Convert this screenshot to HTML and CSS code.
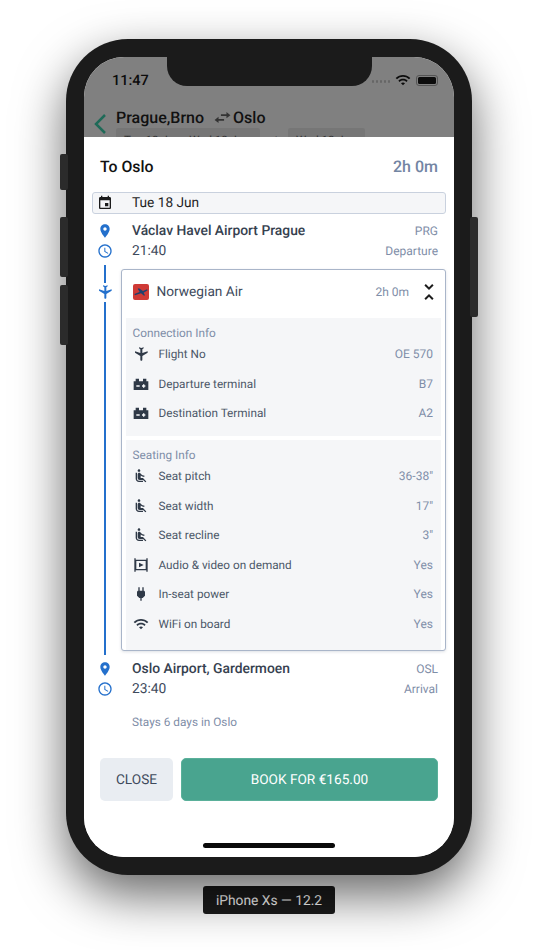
FILE: index.html
```html
<!DOCTYPE html>
<html lang="en">
<head>
  <meta charset="UTF-8">
  <meta name="viewport" content="width=device-width, initial-scale=1.0">
  <title>To Oslo</title>
  <link rel="stylesheet" href="styles.css">
</head>
<body>
  <svg class="defs" width="0" height="0">
    <symbol id="i-place" viewBox="0 0 24 24"><path d="M12 2C8.13 2 5 5.13 5 9c0 5.25 7 13 7 13s7-7.75 7-13c0-3.87-3.13-7-7-7zm0 9.5c-1.38 0-2.5-1.12-2.5-2.5s1.12-2.5 2.5-2.5 2.5 1.12 2.5 2.5-1.12 2.5-2.5 2.5z"/></symbol>
    <symbol id="i-clock" viewBox="0 0 24 24"><path d="M11.99 2C6.47 2 2 6.48 2 12s4.47 10 9.99 10C17.52 22 22 17.52 22 12S17.52 2 11.99 2zM12 20c-4.42 0-8-3.58-8-8s3.58-8 8-8 8 3.58 8 8-3.58 8-8 8zm.5-13H11v6l5.25 3.15.75-1.23-4.5-2.67z"/></symbol>
    <symbol id="i-plane" viewBox="0 0 24 24"><path transform="rotate(180 12 12)" d="M21 16v-2l-8-5V3.5c0-.83-.67-1.5-1.5-1.5S10 2.67 10 3.5V9l-8 5v2l8-2.5V19l-2 1.5V22l3.5-1 3.5 1v-1.5L13 19v-5.5l8 2.5z"/></symbol>
    <symbol id="i-terminal" viewBox="0 0 24 24"><path fill-rule="evenodd" d="M4 8V4h5v4h6V4h5v4h3v13H1V8h3zm1 6v2h5v-2H5zm10 0h-1.500v2H15v1.500h2V16h1.500v-2H17v-1.500h-2V14z"/></symbol>
    <symbol id="i-seat" viewBox="0 0 24 24"><path d="M7.590 5.410c-.78-.78-.78-2.050 0-2.830.78-.78 2.050-.78 2.830 0 .78.78.78 2.050 0 2.830-.79.79-2.050.79-2.830 0zM6 16V7H4v9c0 2.760 2.240 5 5 5h6v-2H9c-1.660 0-3-1.340-3-3zm14 4.070L14.930 15H11.500v-3.680c1.400 1.150 3.600 2.160 5.500 2.160v-2.160c-1.660.02-3.610-.87-4.670-2.040l-1.400-1.550c-.19-.21-.43-.38-.69-.5-.29-.14-.62-.23-.96-.23h-.03C8.010 7 7 8.010 7 9.250V15c0 1.660 1.340 3 3 3h5.070l3.500 3.500L20 20.070z"/></symbol>
    <symbol id="i-video" viewBox="0 0 24 24"><path fill-rule="evenodd" d="M2 2h2v2h16V2h2v20h-2v-2H4v2H2V2zm3 4v12h14V6H5zm4 2.500l7 3.500-7 3.500v-7z"/></symbol>
    <symbol id="i-power" viewBox="0 0 24 24"><path d="M16 7V2h-2v5h-4V2H8v5c-1 0-2 1-2 2v5.500L9.500 18H11v4h2v-4h1.500l3.500-3.500V9c0-1-1-2-2-2z"/></symbol>
    <symbol id="i-wifi" viewBox="0 0 24 24"><path d="M1 9l2 2c4.970-4.970 13.030-4.970 18 0l2-2C16.930 2.930 7.080 2.930 1 9zm8 8l3 3 3-3c-1.650-1.660-4.340-1.660-6 0zm-4-4l2 2c2.760-2.760 7.240-2.760 10 0l2-2C15.140 9.140 8.870 9.140 5 13z"/></symbol>
  </svg>

  <div class="phone">
    <span class="side-btn mute"></span>
    <span class="side-btn vol-up"></span>
    <span class="side-btn vol-down"></span>
    <span class="side-btn power"></span>

    <div class="screen">
      <div class="notch"></div>

      <div class="backdrop">
        <div class="status">
          <span class="clock">11:47</span>
          <span class="status-icons">
            <span class="dots"><i></i><i></i><i></i><i></i><i></i></span>
            <svg class="status-wifi"><use href="#i-wifi"/></svg>
            <span class="battery"><i></i></span>
          </span>
        </div>
        <div class="nav">
          <svg class="back" viewBox="0 0 14 22"><path d="M12 2L3 11l9 9"/></svg>
          <div>
            <div class="route">
              <span>Prague,Brno</span>
              <svg class="swap" viewBox="0 0 24 24"><path d="M10 8h7V5l5 4-5 4v-3h-7zM14 14H7v-3l-5 4 5 4v-3h7z"/></svg>
              <span>Oslo</span>
            </div>
            <div class="chips">
              <span class="chip chip-out">Tue 18 Jun - Wed 18 Jun</span>
              <span class="chip-sep">⇄</span>
              <span class="chip chip-back">Wed 18 Jun</span>
            </div>
          </div>
        </div>
      </div>

      <div class="sheet">
        <div class="sheet-head">
          <span class="sheet-title">To Oslo</span>
          <span class="sheet-time">2h 0m</span>
        </div>

        <div class="date-bar">
          <svg class="date-icon" viewBox="0 0 24 24"><path d="M17 12h-5v5h5v-5zM16 1v2H8V1H6v2H5c-1.110 0-1.990.9-1.990 2L3 19c0 1.100.89 2 2 2h14c1.100 0 2-.9 2-2V5c0-1.100-.9-2-2-2h-1V1h-2zm3 18H5V8h14v11z"/></svg>
          <span>Tue 18 Jun</span>
        </div>

        <div class="stop stop-from">
          <div class="stop-row">
            <svg class="stop-icon"><use href="#i-place"/></svg>
            <span class="stop-name">Václav Havel Airport Prague</span>
            <span class="stop-side">PRG</span>
          </div>
          <div class="stop-row">
            <svg class="stop-icon"><use href="#i-clock"/></svg>
            <span class="stop-time">21:40</span>
            <span class="stop-side">Departure</span>
          </div>
        </div>

        <div class="leg">
          <div class="rail">
            <span class="rail-line rail-top"></span>
            <svg class="rail-plane"><use href="#i-plane"/></svg>
            <span class="rail-line rail-rest"></span>
          </div>

          <div class="card">
            <div class="card-head">
              <span class="logo"><svg viewBox="0 0 24 24"><path d="M2 15l8-3-3-5 2-.5 6 4 6-2.500 1 1.500-6 3.500 2 4-1.500.5-4.500-3.500-9 3z"/></svg></span>
              <span class="airline">Norwegian Air</span>
              <span class="card-time">2h 0m</span>
              <svg class="unfold" viewBox="0 0 24 24"><path d="M7.410 18.590L8.830 20 12 16.830 15.170 20l1.410-1.410L12 14l-4.590 4.590zm9.180-13.180L15.170 4 12 7.170 8.830 4 7.410 5.410 12 10l4.590-4.590z"/></svg>
            </div>

            <div class="info info-conn">
              <div class="info-title">Connection Info</div>
              <div class="info-row"><svg class="info-icon"><use href="#i-plane"/></svg><span>Flight No</span><b>OE 570</b></div>
              <div class="info-row"><svg class="info-icon"><use href="#i-terminal"/></svg><span>Departure terminal</span><b>B7</b></div>
              <div class="info-row"><svg class="info-icon"><use href="#i-terminal"/></svg><span>Destination Terminal</span><b>A2</b></div>
            </div>

            <div class="info info-seat">
              <div class="info-title">Seating Info</div>
              <div class="info-row"><svg class="info-icon"><use href="#i-seat"/></svg><span>Seat pitch</span><b>36-38"</b></div>
              <div class="info-row"><svg class="info-icon"><use href="#i-seat"/></svg><span>Seat width</span><b>17"</b></div>
              <div class="info-row"><svg class="info-icon"><use href="#i-seat"/></svg><span>Seat recline</span><b>3"</b></div>
              <div class="info-row"><svg class="info-icon"><use href="#i-video"/></svg><span>Audio &amp; video on demand</span><b>Yes</b></div>
              <div class="info-row"><svg class="info-icon"><use href="#i-power"/></svg><span>In-seat power</span><b>Yes</b></div>
              <div class="info-row"><svg class="info-icon"><use href="#i-wifi"/></svg><span>WiFi on board</span><b>Yes</b></div>
            </div>
          </div>
        </div>

        <div class="stop stop-to">
          <div class="stop-row">
            <svg class="stop-icon"><use href="#i-place"/></svg>
            <span class="stop-name">Oslo Airport, Gardermoen</span>
            <span class="stop-side">OSL</span>
          </div>
          <div class="stop-row">
            <svg class="stop-icon"><use href="#i-clock"/></svg>
            <span class="stop-time">23:40</span>
            <span class="stop-side">Arrival</span>
          </div>
        </div>

        <div class="stays">Stays 6 days in Oslo</div>

        <div class="actions">
          <button class="btn btn-close" type="button">CLOSE</button>
          <button class="btn btn-book" type="button">BOOK FOR €165.00</button>
        </div>

        <div class="home-bar"></div>
      </div>
    </div>
  </div>

  <div class="device-label">iPhone Xs — 12.2</div>
</body>
</html>
```

FILE: styles.css
```css
* {
  box-sizing: border-box;
}
html, body {
  margin: 0;
  height: 950px;
  overflow: hidden;
}
body {
  background: #fff;
  font-family: Roboto, "Liberation Sans", sans-serif;
  text-rendering: geometricPrecision;
  display: flex;
  flex-direction: column;
  align-items: center;
  padding-top: 39px;
}
.defs {
  position: absolute;
}

/* device */
.phone {
  position: relative;
  width: 406px;
  height: 836px;
  padding: 18px;
  background: #1b1b1b;
  border-radius: 62px;
  box-shadow: 0 20px 50px rgba(0, 0, 0, .6);
}
.side-btn {
  position: absolute;
  width: 8px;
  background: #2b2b2b;
  border-radius: 2px;
}
.mute { left: -6px; top: 115px; height: 36px; }
.vol-up { left: -6px; top: 178px; height: 60px; }
.vol-down { left: -6px; top: 246px; height: 60px; }
.power { right: -6px; top: 178px; height: 100px; }
.screen {
  position: relative;
  height: 800px;
  border-radius: 40px;
  overflow: hidden;
  background: #fff;
}
.notch {
  position: absolute;
  left: 83px;
  top: 0;
  width: 205px;
  height: 29px;
  background: #1b1b1b;
  border-radius: 0 0 20px 20px;
}

/* greyed page behind the sheet */
.backdrop {
  height: 80px;
  background: #808080;
  overflow: hidden;
}
.status {
  display: flex;
  justify-content: space-between;
  align-items: center;
  height: 20px;
  margin-top: 13px;
  padding: 0 16px 0 28px;
}
.clock {
  font-size: 14.500px;
  font-weight: 500;
  color: #0c0c0c;
}
.status-icons {
  display: flex;
  align-items: center;
}
.dots {
  display: flex;
  gap: 1.500px;
  margin-right: 5px;
  padding-top: 3px;
}
.dots i {
  width: 2.500px;
  height: 2.500px;
  border-radius: 50%;
  background: #666;
}
.status-wifi {
  width: 16px;
  height: 16px;
  fill: #0c0c0c;
  margin-right: 5px;
}
.battery {
  display: block;
  width: 22px;
  height: 11px;
  padding: 1px;
  border: 1px solid #555;
  border-radius: 3px;
}
.battery i {
  display: block;
  height: 100%;
  background: #0c0c0c;
  border-radius: 1.500px;
}
.nav {
  display: flex;
  margin-top: 16px;
  padding-left: 9px;
}
.back {
  width: 14px;
  height: 22px;
  margin-top: 7px;
  margin-right: 9px;
  fill: none;
  stroke: #1f6a58;
  stroke-width: 2.500;
}
.route {
  display: flex;
  align-items: center;
  height: 22px;
  font-size: 16px;
  font-weight: 500;
  color: #111;
}
.swap {
  width: 19px;
  height: 19px;
  margin: 0 1px 0 9px;
  fill: #333;
}
.chips {
  display: flex;
  align-items: center;
  font-size: 11.500px;
  color: #333;
}
.chip {
  background: #767676;
  padding: 5px 8px;
  border-radius: 2px;
  white-space: nowrap;
}
.chip-out { width: 144px; }
.chip-back { width: 77px; }
.chip-sep {
  width: 28px;
  text-align: center;
}

/* sheet */
.sheet {
  height: 720px;
  background: #fff;
  border-radius: 4px 4px 0 0;
  padding-top: 18px;
}
.sheet-head {
  display: flex;
  justify-content: space-between;
  align-items: center;
  height: 22px;
  padding: 0 16px;
}
.sheet-title {
  font-size: 15.800px;
  font-weight: 500;
  color: #111;
}
.sheet-time {
  font-size: 16px;
  font-weight: 500;
  color: #7385a3;
}
.date-bar {
  display: flex;
  align-items: center;
  height: 22px;
  margin: 15px 8px 0;
  background: #f5f6f8;
  border: 1px solid #c9d1de;
  border-radius: 3px;
  font-size: 13.700px;
  color: #1e1e1e;
}
.date-icon {
  width: 16px;
  height: 16px;
  margin: 0 19px 0 4px;
  fill: #1c1c1c;
}
.stop {
  padding: 0 16px 0 13px;
}
.stop-from {
  margin-top: 7px;
}
.stop-to {
  margin-top: 8px;
}
.stop-row {
  display: flex;
  align-items: center;
  height: 20px;
}
.stop-icon {
  width: 16px;
  height: 16px;
  flex: none;
  fill: #2470cc;
  margin-right: 19px;
}
.stop-name {
  flex: 1;
  font-size: 13.850px;
  font-weight: 500;
  color: #36414f;
}
.stop-time {
  flex: 1;
  font-size: 13.800px;
  color: #3e4a5c;
}
.stop-side {
  font-size: 12px;
  color: #7f8ea8;
}

/* flight leg */
.leg {
  display: flex;
  margin-top: 4px;
  padding-right: 8px;
}
.rail {
  display: flex;
  flex-direction: column;
  align-items: center;
  width: 36px;
  margin-left: 3px;
  margin-right: -2.500px;
  margin-bottom: -4px;
  flex: none;
}
.rail-line {
  width: 2px;
  background: #2470cc;
}
.rail-top {
  height: 18px;
}
.rail-rest {
  flex: 1;
}
.rail-plane {
  width: 16px;
  height: 16px;
  flex: none;
  margin: 1px 0 2px;
  fill: #2470cc;
}
.card {
  flex: 1;
  margin-top: 4px;
  border: 1px solid #a9b5c9;
  border-radius: 3px;
  background: #fff;
  padding: 0 4px;
  box-shadow: 0 1px 3px rgba(90, 105, 130, .2);
}
.card-head {
  display: flex;
  align-items: center;
  height: 47.500px;
  padding: 0 7px 3.500px;
}
.logo {
  display: flex;
  width: 16px;
  height: 16px;
  background: #cf3a36;
  border-radius: 2px;
  margin-right: 8px;
}
.logo svg {
  fill: #20406e;
}
.airline {
  flex: 1;
  font-size: 13.700px;
  color: #3e4a5c;
}
.card-time {
  font-size: 12px;
  color: #7f8ea8;
  margin-right: 8px;
}
.unfold {
  width: 24px;
  height: 24px;
  fill: #1c1c1c;
  margin-right: -7px;
}
.info {
  background: #f5f6f8;
  padding: 8px 8px 0;
}
.info-conn {
  height: 118px;
}
.info-seat {
  height: 210px;
  margin-top: 4px;
}
.info-title {
  height: 14px;
  line-height: 14px;
  margin-left: -1px;
  font-size: 11.800px;
  color: #7f8ea8;
}
.info-row {
  display: flex;
  align-items: center;
  height: 29.500px;
  font-size: 11.750px;
  color: #4c5868;
}
.info-row span {
  flex: 1;
}
.info-row b {
  font-size: 12px;
  font-weight: 400;
  color: #7f8ea8;
}
.info-icon {
  width: 16px;
  height: 16px;
  flex: none;
  margin: 0 10px 0 -1px;
  fill: #2f3947;
}

/* footer */
.stays {
  margin-top: 14px;
  padding-left: 48px;
  font-size: 11.800px;
  line-height: 18px;
  color: #7f8ea8;
}
.actions {
  display: flex;
  gap: 8px;
  margin-top: 27px;
  padding: 0 16px;
}
.btn {
  height: 43px;
  padding-top: 2px;
  border-radius: 5px;
  font-family: inherit;
  font-size: 13.650px;
  text-rendering: geometricPrecision;
}
.btn-close {
  width: 73px;
  flex: none;
  border: 0;
  padding-left: 0;
  padding-right: 0;
  background: #e9edf2;
  color: #3e4a5c;
}
.btn-book {
  flex: 1;
  border: 1px solid #5ab09a;
  background: #49a48f;
  color: #fff;
}
.home-bar {
  width: 132px;
  height: 5px;
  margin: 42px auto 0;
  background: #0a0a0a;
  border-radius: 3px;
}
.device-label {
  margin-top: 11px;
  width: 132px;
  height: 28px;
  line-height: 30px;
  background: #1b1b1b;
  border-radius: 3px;
  text-align: center;
  font-size: 13.800px;
  color: #fff;
}
```
